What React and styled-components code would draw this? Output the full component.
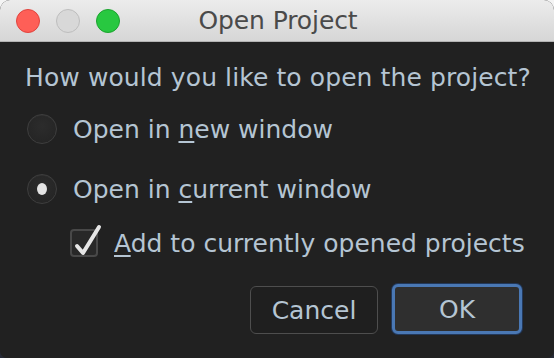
import React, { useState } from "react";
import styled, { createGlobalStyle } from "styled-components";

const GlobalStyle = createGlobalStyle`
  html, body {
    margin: 0;
    padding: 0;
    background: linear-gradient(#f4f4f4 0, #f4f4f4 40px, #262a36 300px);
  }
  body {
    font-family: "DejaVu Sans", "Noto Sans", sans-serif;
  }
`;

const Window = styled.div`
  width: 554px;
  height: 358px;
  border-radius: 10px 10px 7px 7px;
  overflow: hidden;
  background: #212121;
  display: flex;
  flex-direction: column;
`;

const TitleBar = styled.div`
  height: 41px;
  flex: none;
  background: linear-gradient(#ececec, #d6d6d6);
  border-bottom: 1px solid #b3b3b3;
  display: grid;
  grid-template-columns: 1fr auto 1fr;
  align-items: center;
  padding: 0 16px;
`;

const Lights = styled.div`
  display: flex;
  gap: 16px;
`;

const Light = styled.span`
  width: 24px;
  height: 24px;
  border-radius: 50%;
  box-sizing: border-box;
  background: ${(p) => p.$bg};
  border: 1px solid ${(p) => p.$edge};
`;

const Title = styled.div`
  font-size: 25px;
  color: #4a4a4a;
  letter-spacing: -0.1px;
  margin-left: 2px;
`;

const Body = styled.div`
  padding: 21px 25px 0 25px;
  display: flex;
  flex-direction: column;
  color: #b5c5d3;
`;

const Question = styled.div`
  font-size: 25px;
  line-height: 30px;
  height: 30px;
  letter-spacing: 0.1px;
  white-space: nowrap;
`;

const Option = styled.label`
  display: flex;
  align-items: center;
  gap: 16px;
  height: 30px;
  margin-top: ${(p) => p.$top}px;
  margin-left: ${(p) => p.$indent || 2}px;
  font-size: 25px;
  letter-spacing: 0;
  white-space: nowrap;
  cursor: default;
`;

const RadioDot = styled.span`
  width: 30px;
  height: 30px;
  flex: none;
  box-sizing: border-box;
  border-radius: 50%;
  border: 1px solid #3e3e3e;
  background: radial-gradient(circle at 50% 40%, #2c2c2c, #232323);
  box-shadow: inset 0 1px 0 rgba(255, 255, 255, 0.04);
  display: flex;
  align-items: center;
  justify-content: center;

  &::after {
    content: "";
    display: ${(p) => (p.$on ? "block" : "none")};
    width: 10px;
    height: 12px;
    border-radius: 50%;
    background: #e4e4e4;
  }
`;

const CheckBox = styled.span`
  position: relative;
  width: 28px;
  height: 28px;
  box-sizing: border-box;
  border: 2px solid #484848;
  border-radius: 4px;
  background: #282828;
  flex: none;

  svg {
    position: absolute;
    left: -2px;
    top: -2px;
    overflow: visible;
  }
`;

const Mn = styled.span`
  text-decoration: underline;
  text-underline-offset: 3px;
  text-decoration-thickness: 2px;
`;

const Buttons = styled.div`
  display: flex;
  justify-content: flex-end;
  gap: 14px;
  margin-top: 28px;
  margin-right: 7px;
`;

const Button = styled.button`
  font-family: inherit;
  font-size: 25px;
  color: #b5c5d3;
  height: ${(p) => (p.$primary ? 50 : 48)}px;
  width: ${(p) => (p.$primary ? 130 : 128)}px;
  margin-top: ${(p) => (p.$primary ? -2 : 0)}px;
  box-sizing: border-box;
  border-radius: 6px;
  background: ${(p) => (p.$primary ? "#2f2f2f" : "#1f1f1f")};
  border: ${(p) => (p.$primary ? "3px solid #4a78b4" : "1px solid #4e4e4e")};
  box-shadow: ${(p) => (p.$primary ? "0 0 0 1px #22385a" : "none")};
  padding: 0;
  cursor: default;
`;

export default function App() {
  const [mode, setMode] = useState("current");
  const [add, setAdd] = useState(true);

  return (
    <>
      <GlobalStyle />
      <Window>
        <TitleBar>
          <Lights>
            <Light $bg="#fe5f57" $edge="#e0443e" />
            <Light $bg="#d8d8d8" $edge="#bdbdbd" />
            <Light $bg="#28c840" $edge="#1ca32f" />
          </Lights>
          <Title>Open Project</Title>
          <span />
        </TitleBar>
        <Body>
          <Question>How would you like to open the project?</Question>
          <Option $top={21} onClick={() => setMode("new")}>
            <RadioDot $on={mode === "new"} />
            <span>
              Open in <Mn>n</Mn>ew window
            </span>
          </Option>
          <Option $top={30} onClick={() => setMode("current")}>
            <RadioDot $on={mode === "current"} />
            <span>
              Open in <Mn>c</Mn>urrent window
            </span>
          </Option>
          <Option $top={24} $indent={45} onClick={() => setAdd(!add)}>
            <CheckBox>
              {add && (
                <svg width="28" height="28" viewBox="0 0 28 28">
                  <path
                    d="M7 17 L13 24 L29 -2"
                    fill="none"
                    stroke="#e6e6e6"
                    strokeWidth="4"
                    strokeLinecap="round"
                    strokeLinejoin="round"
                  />
                </svg>
              )}
            </CheckBox>
            <span>
              <Mn>A</Mn>dd to currently opened projects
            </span>
          </Option>
          <Buttons>
            <Button>Cancel</Button>
            <Button $primary>OK</Button>
          </Buttons>
        </Body>
      </Window>
    </>
  );
}
